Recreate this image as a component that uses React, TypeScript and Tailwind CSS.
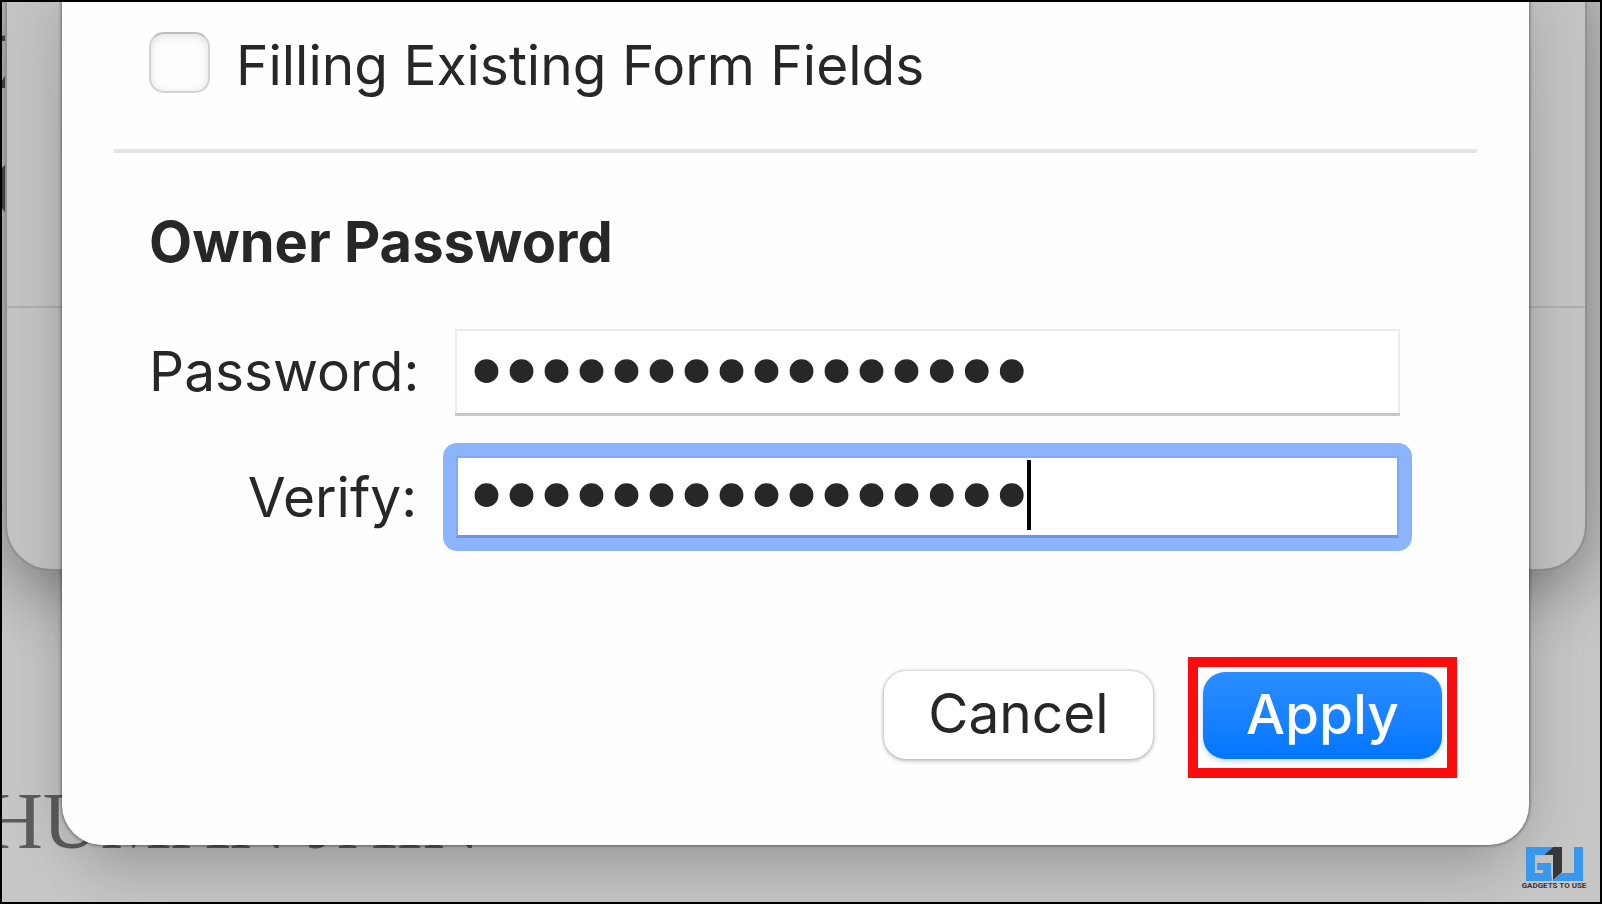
import React, { useState } from 'react';

interface PasswordFieldProps {
  id: string;
  label: string;
  value: string;
  active?: boolean;
  onChange: (value: string) => void;
}

const PasswordField: React.FC<PasswordFieldProps> = ({ id, label, value, active, onChange }) => (
  <div className="flex items-center">
    <label htmlFor={id} className="w-[268px] shrink-0 text-right text-[55px] leading-[64px]">{label}</label>
    <div className="relative ml-[38px] flex-1">
      <input
        id={id}
        type="password"
        value={value}
        onChange={e => onChange(e.target.value)}
        className={`block h-[84px] w-full bg-white pb-1 font-['Liberation_Serif'] text-[100px] leading-[80px] caret-transparent outline-none
                    ${active
                      ? 'border-[3px] border-b-4 border-[#82a9f5] border-b-[#6b95e6] pl-[11px]'
                      : 'border-2 border-b-0 border-[#ececec] px-3 shadow-[0_3px_0_0_#c8c8c8]'}`}
      />
      {/* Focus ring */}
      {active && <span className="pointer-events-none absolute -inset-3 rounded-[14px] border-[13px] border-[#8bb4fb]" />}
      {active && <span className="absolute left-[572px] top-[5px] h-[70px] w-1 bg-black" />}
    </div>
  </div>
);

const Logo: React.FC = () => (
  <div className="absolute bottom-[11px] right-[14px] flex w-[64px] flex-col items-center">
    <svg viewBox="0 0 57 34" className="h-[34px] w-[57px]">
      <path d="M0 0H27L18 8H9V26H17V23H11V16H25V25L26 34H0Z" fill="#3a97ee" />
      <path d="M35 26H48V0H57V34H26Z" fill="#3a97ee" />
      <path d="M27 0H36V25L27 33V8H18Z" fill="#383838" />
    </svg>
    <span className="whitespace-nowrap font-['Roboto'] text-[8px] font-bold leading-[10px] text-[#333]">GADGETS TO USE</span>
  </div>
);

const App: React.FC = () => {
  const [allowForms, setAllowForms] = useState<boolean>(false);
  const [password, setPassword] = useState<string>('correcthorse1234');
  const [verify, setVerify] = useState<string>('correcthorse1234');

  return (
    <div className="relative min-h-screen overflow-hidden border-2 border-black bg-[#c6c6c6] pl-[60px] pr-[71px] font-['Inter',sans-serif] text-[#272727]">
      {/* Document behind the sheet */}
      <p className="absolute -left-[17px] top-[773px] whitespace-nowrap font-['Liberation_Serif'] text-[80px] leading-[92px] text-[#5c5c5c]">HUMAN JAIN</p>
      <svg viewBox="0 0 4 220" className="absolute left-0 top-0 h-[220px] w-1" fill="#4a4a4a">
        <path d="M0 34L4 33V39H0Z" />
        <path d="M0 79L4 72V86H0Z" />
        <path d="M0 166L4 162V212L0 206Z" />
      </svg>
      <div className="absolute -top-12 left-[3px] right-[13px] h-[617px] rounded-[46px] border-2 border-[#929292] bg-[#c4c4c4] shadow-[0_16px_70px_rgba(0,0,0,0.4)]">
        <div className="mt-[350px] h-[2px] bg-[#afafaf]" />
      </div>

      <main className="relative rounded-b-[40px] bg-[#fefefe] px-[52px] pb-[67px] pt-[30px] shadow-[0_0_3px_1px_rgba(0,0,0,0.4),0_0_60px_rgba(0,0,0,0.18),0_60px_60px_-30px_rgba(0,0,0,0.12)]">
        <div className="flex items-start px-[35px]">
          <input
            id="forms"
            type="checkbox"
            checked={allowForms}
            onChange={e => setAllowForms(e.target.checked)}
            className="h-[61px] w-[61px] appearance-none rounded-[15px] border-2 border-[#d2d2d2] border-t-[#bdbdbd] bg-[#fdfdfd] shadow-[inset_0_2px_8px_rgba(0,0,0,0.12)] checked:bg-[#0a7aff]"
          />
          <label htmlFor="forms" className="ml-[26px] text-[55px] leading-[66px]">Filling Existing Form Fields</label>
        </div>
        <hr className="mt-[51px] border-t-4 border-[#e5e5e5]" />

        <section className="pl-[35px] pr-[77px]">
          <h2 className="mt-[57px] text-[56px] font-bold leading-[64px]">Owner Password</h2>
          <div className="mt-[55px] flex flex-col gap-[42px]">
            <PasswordField id="password" label="Password:" value={password} onChange={setPassword} />
            <PasswordField id="verify" label="Verify:" value={verify} active onChange={setVerify} />
          </div>
        </section>

        <div className="mt-[118px] flex items-start justify-end pr-5">
          <button className="mr-[35px] mt-[14px] h-[88px] w-[269px] rounded-[22px] bg-white pb-1 text-[55px] leading-[64px] shadow-[0_0_3px_1px_rgba(0,0,0,0.16),0_2px_5px_rgba(0,0,0,0.2)]">Cancel</button>
          <div className="border-[10px] border-[#fb0d0d] px-[5px] pb-[9px] pt-[5px]">
            <button className="block h-[87px] w-[239px] rounded-[22px] bg-linear-to-b from-[#2a8dff] to-[#0076ff] pb-1 text-[55px] font-medium leading-[64px] text-white shadow-[0_2px_5px_rgba(0,90,200,0.25)]">Apply</button>
          </div>
        </div>
      </main>

      <Logo />
    </div>
  );
};

export default App;
